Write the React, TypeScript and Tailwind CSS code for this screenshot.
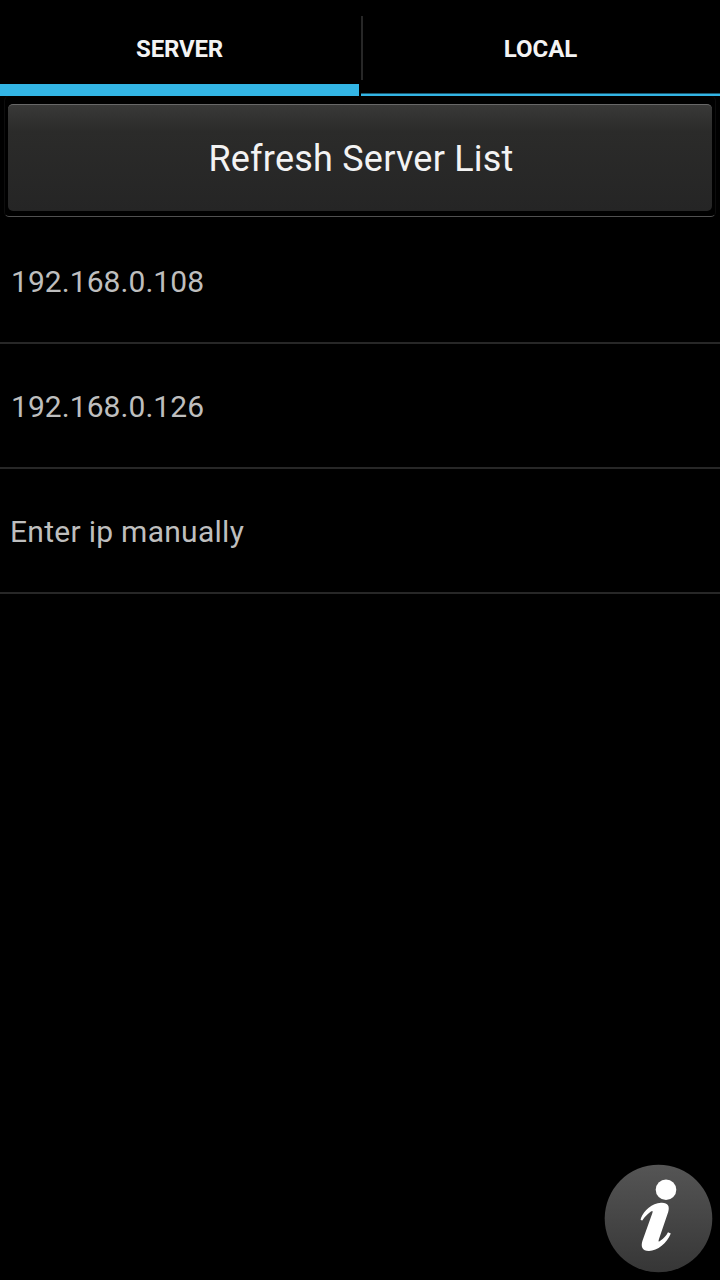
import React from "react";

const servers = [
  { label: "192.168.0.108", spacing: "pl-[11px] tracking-[0.06px]" },
  { label: "192.168.0.126", spacing: "pl-[11px] tracking-[0.06px]" },
  { label: "Enter ip manually", spacing: "pl-[10px] tracking-[0.28px]" },
];

function InfoIcon() {
  return (
    <svg viewBox="0 0 109 109" className="size-[109px]" aria-hidden="true">
      <defs>
        <linearGradient id="disc" x1="0" y1="0" x2="0" y2="1">
          <stop offset="0" stopColor="#555555" />
          <stop offset="1" stopColor="#363636" />
        </linearGradient>
      </defs>
      <circle cx="54.5" cy="54.5" r="53.8" fill="url(#disc)" />
      <circle cx="62" cy="25.8" r="10.3" fill="#fff" />
      <path
        d="M37 54C40 46.5 48 39.3 57 38.8C63.8 38.4 66 42 64.2 48L55 75C54 78 54.8 78.2 56.6 76.6C60 74 62.2 71.8 64 68.2L66.8 69.6C63 79 53.5 87 45 87C38 87 36.7 82.6 38.4 77L48.2 49.5C49.2 46.5 48.4 46.4 46.6 47.8C43 50.4 41 52.6 38.3 56.6L36.6 56Z"
        fill="#fff"
      />
    </svg>
  );
}

export default function App() {
  return (
    <div className="flex h-[1280px] w-[720px] flex-col bg-black font-['Roboto',sans-serif]">
      <nav className="flex h-24 text-2xl font-bold text-[#f3f3f3]">
        <button className="mr-0.5 h-24 w-[359px] border-b-[12px] border-[#33b5e5] pt-3.5 tracking-[-0.2px]">SERVER</button>
        <div className="flex h-24 flex-1 border-b-2 border-[#33b5e5]">
          <div className="flex h-[94px] flex-1 border-b border-[#195a72]">
            <div className="mt-4 h-16 w-0.5 bg-[#272727]" />
            <button className="h-[93px] flex-1 pt-[5px] pr-0.5">LOCAL</button>
          </div>
        </div>
      </nav>
      <div className="px-1 pb-0.5">
        <div className="rounded-[5px] border-x border-b border-x-[#0d0d0d] border-b-[#505050] px-[3px] pt-2 pb-[5px]">
          <button className="h-[107px] w-full rounded-[5px] border-t border-[#686868] bg-linear-to-b from-[#393938] via-[#2b2b2a] via-25% to-[#252525] pt-px pl-0.5 text-4xl tracking-[0.22px] text-[#f3f3f3]">Refresh Server List</button>
        </div>
      </div>
      <ul className="text-[30px] text-[#bebebe]">
        {servers.map(({ label, spacing }) => (
          <li key={label} className={`flex h-[125px] items-center border-b-2 border-[#272727] pt-0.5 ${spacing}`}>{label}</li>
        ))}
      </ul>
      <button className="mt-auto mr-[7px] mb-[7px] self-end" aria-label="Info">
        <InfoIcon />
      </button>
    </div>
  );
}
